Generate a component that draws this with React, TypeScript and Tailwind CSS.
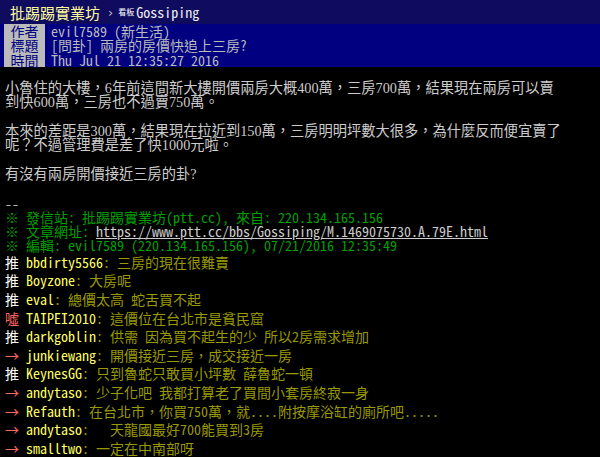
import React from 'react';

const MONO = "font-['Noto_Sans_Mono_CJK_TC','Liberation_Mono','Noto_Sans_CJK_TC',monospace]";
const BODY = "font-['Liberation_Serif','Noto_Sans_CJK_TC',serif]";

interface Push {
    tag: '推' | '噓' | '→';
    user: string;
    content: string;
}

const pushes: Push[] = [
    { tag: '推', user: 'bbdirty5566', content: ' 三房的現在很難賣' },
    { tag: '推', user: 'Boyzone', content: ' 大房呢' },
    { tag: '推', user: 'eval', content: ' 總價太高 蛇舌買不起' },
    { tag: '噓', user: 'TAIPEI2010', content: ' 這價位在台北市是貧民窟' },
    { tag: '推', user: 'darkgoblin', content: ' 供需 因為買不起生的少 所以2房需求增加' },
    { tag: '→', user: 'junkiewang', content: ' 開價接近三房，成交接近一房' },
    { tag: '推', user: 'KeynesGG', content: ' 只到魯蛇只敢買小坪數 薛魯蛇一頓' },
    { tag: '→', user: 'andytaso', content: ' 少子化吧 我都打算老了買間小套房終寂一身' },
    { tag: '→', user: 'Refauth', content: ' 在台北市，你買750萬，就....附按摩浴缸的廁所吧.....' },
    { tag: '→', user: 'andytaso', content: '   天龍國最好700能買到3房' },
    { tag: '→', user: 'smalltwo', content: ' 一定在中南部呀' },
];

const metas = [
    { tag: '作者', value: 'evil7589 (新生活)' },
    { tag: '標題', value: '[問卦] 兩房的房價快追上三房?' },
    { tag: '時間', value: 'Thu Jul 21 12:35:27 2016' },
];

const bodyLines = [
    '小魯住的大樓，6年前這間新大樓開價兩房大概400萬，三房700萬，結果現在兩房可以賣',
    '到快600萬，三房也不過賣750萬。',
    '',
    '本來的差距是300萬，結果現在拉近到150萬，三房明明坪數大很多，為什麼反而便宜賣了',
    '呢？不過管理費是差了快1000元啦。',
    '',
    '有沒有兩房開價接近三房的卦?',
    '',
];

export default function App() {
    return (
        <div className="w-[600px] h-[457px] overflow-hidden bg-black text-[14px]">
            {/* top bar */}
            <div className="h-[24px] bg-[#0f0b5f] flex items-center pl-[10px]">
                <span className="font-['Noto_Sans_CJK_TC',sans-serif] text-[15px] leading-none text-[#ffff99]">
                    批踢踢實業坊
                </span>
                <span className="ml-[8px] text-[#bbbbbb] text-[13px] leading-none font-['DejaVu_Sans',sans-serif]">›</span>
                <span className="ml-[5px] font-['Noto_Sans_CJK_TC',sans-serif] text-[8px] leading-none text-white">看板</span>
                <span className={`${MONO} ml-[2px] text-[14px] leading-none text-[#eeeeee]`}>Gossiping</span>
            </div>

            {/* meta header */}
            <div className={`bg-[#000080] ${MONO}`}>
                {metas.map((m) => (
                    <div key={m.tag} className="h-[14.3px] leading-[14.3px] flex">
                        <span className="ml-[4px] w-[41px] bg-[#bbbbbb] text-[#000080] text-center">{m.tag}</span>
                        <span className="ml-[6px] text-[#bbbbbb] whitespace-pre">{m.value}</span>
                    </div>
                ))}
            </div>
            <div className="h-[14.3px]" />

            {/* body */}
            <div className={`${BODY} text-[14.25px] text-[#cccccc] pl-[5px]`}>
                {bodyLines.map((l, i) => (
                    <div key={i} className="h-[14.3px] leading-[14.3px] whitespace-pre">{l}</div>
                ))}
            </div>

            <div className={`${MONO} pl-[5px]`}>
                <div className="h-[14.3px] leading-[14.3px] text-[#bbbbbb]">--</div>
                <div className="h-[14.3px] leading-[14.3px] text-[#00a000] whitespace-pre">
                    ※ 發信站: 批踢踢實業坊(ptt.cc), 來自: 220.134.165.156
                </div>
                <div className="h-[14.3px] leading-[14.3px] text-[#00a000] whitespace-pre">
                    ※ 文章網址: <span className="text-[#cccccc] underline">https://www.ptt.cc/bbs/Gossiping/M.1469075730.A.79E.html</span>
                </div>
                <div className="h-[14.3px] leading-[14.3px] text-[#00a000] whitespace-pre">
                    ※ 編輯: evil7589 (220.134.165.156), 07/21/2016 12:35:49
                </div>

                {pushes.map((p, i) => (
                    <div key={i} className="h-[18.6px] leading-[18.6px] flex whitespace-pre">
                        <span className={p.tag === '推' ? 'text-white' : 'text-[#ff6666]'}>{p.tag} </span>
                        <span className="text-[#ffff66]">{p.user}</span>
                        <span className="text-[#999900]">:{p.content}</span>
                    </div>
                ))}
            </div>
        </div>
    );
}
